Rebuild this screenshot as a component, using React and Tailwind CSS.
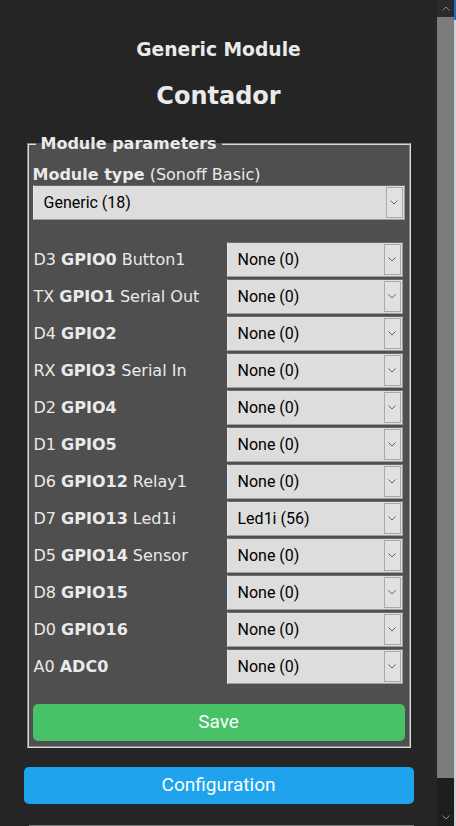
import React from "react";

const rows = [
  ["D3", "GPIO0", "Button1", "None (0)"],
  ["TX", "GPIO1", "Serial Out", "None (0)"],
  ["D4", "GPIO2", "", "None (0)"],
  ["RX", "GPIO3", "Serial In", "None (0)"],
  ["D2", "GPIO4", "", "None (0)"],
  ["D1", "GPIO5", "", "None (0)"],
  ["D6", "GPIO12", "Relay1", "None (0)"],
  ["D7", "GPIO13", "Led1i", "Led1i (56)"],
  ["D5", "GPIO14", "Sensor", "None (0)"],
  ["D8", "GPIO15", "", "None (0)"],
  ["D0", "GPIO16", "", "None (0)"],
  ["A0", "ADC0", "", "None (0)"],
];

function Chevron({ up = false, color = "#555" }) {
  return (
    <svg width="8" height="5" viewBox="0 0 8 5" fill="none">
      <path
        d={up ? "M0.5 4.5 L4 1 L7.5 4.5" : "M0.5 0.5 L4 4 L7.5 0.5"}
        stroke={color}
        strokeWidth="1"
      />
    </svg>
  );
}

function Select({ value, className }) {
  return (
    <div
      className={
        "flex h-[35px] items-stretch bg-[#dddddd] border border-[#9d9d9d] border-t-[#6a6a6a] border-l-[#e6e6e6] " +
        className
      }
    >
      <div className="flex flex-1 items-center pl-[10px] text-[16px] text-black font-['Roboto',sans-serif]">
        {value}
      </div>
      <div className="my-[1px] mr-[1px] flex w-[17px] items-center justify-center border border-[#a9a9a9] bg-[#e1e1e1]">
        <Chevron color="#666" />
      </div>
    </div>
  );
}

export default function App() {
  return (
    <div className="flex h-[826px] w-[456px] overflow-hidden bg-[#252525] text-[#eaeaea] font-['DejaVu_Sans',sans-serif] text-[16px]">
      <div className="w-[437px] flex-none">
        <div className="mx-auto w-[390px]">
          <div className="pt-[39px] text-center">
            <div className="text-[18.72px] font-bold leading-[22px]">Generic Module</div>
            <div className="mt-[21px] text-[24px] font-bold leading-[28px]">Contador</div>
          </div>

          <fieldset className="mx-[3px] mt-[25px] border-2 [border-style:groove] border-[#dcdcdc] bg-[#4f4f4f] px-[4px] pt-[12px] pb-[5px]">
            <legend className="ml-[3px] px-[5px] font-bold leading-[18.6px] text-[#eaeaea]">
              Module parameters
            </legend>
            <div className="leading-[18.6px]">
              <b>Module type</b> (Sonoff Basic)
            </div>
            <Select value="Generic (18)" className="mt-[1px]" />

            <div className="mt-[22px] flex flex-col gap-[2px] pl-[1px] pr-[2px]">
              {rows.map(([pin, gpio, fn, val]) => (
                <div key={gpio} className="flex h-[35px] items-center justify-between">
                  <div className="whitespace-nowrap">
                    {pin} <b>{gpio}</b>
                    {fn ? " " + fn : ""}
                  </div>
                  <Select value={val} className="w-[176px] flex-none" />
                </div>
              ))}
            </div>

            <button className="mt-[20px] flex h-[37px] w-full items-center justify-center rounded-[5px] bg-[#47c266] text-[19px] text-[#faffff] font-['Roboto',sans-serif]">
              Save
            </button>
          </fieldset>

          <button className="mt-[19px] flex h-[37px] w-full items-center justify-center rounded-[5px] bg-[#1fa3ec] text-[19px] text-[#faffff] font-['Roboto',sans-serif]">
            Configuration
          </button>

          <div className="mt-[21px] ml-[5px] h-[3px] bg-[#777777]" />
        </div>
      </div>

      <div className="flex w-[17px] flex-none flex-col bg-[#1e1e1e]">
        <div className="flex h-[17px] items-center justify-center bg-[#2b2b2b]">
          <Chevron up color="#8a8a8a" />
        </div>
        <div className="h-[761px] bg-[#7c7c7c]" />
        <div className="flex-1" />
        <div className="flex h-[17px] items-center justify-center">
          <Chevron color="#8a8a8a" />
        </div>
      </div>
      <div className="flex w-[2px] flex-none flex-col bg-[#cfd3d8]">
        <div className="h-[20px] bg-[#2b6cb0]" />
      </div>
    </div>
  );
}
